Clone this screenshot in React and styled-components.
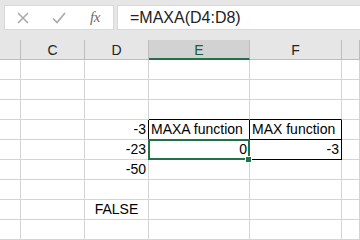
import React from 'react';
import styled, { createGlobalStyle } from 'styled-components';

const GlobalStyle = createGlobalStyle`
    body {
        margin: 0;
        background: #ffffff;
        font-family: "Liberation Sans", Arial, sans-serif;
    }
`;

const Sheet = styled.div`
    width: 360px;
    height: 240px;
    overflow: hidden;
    background: #ffffff;
`;

const FormulaBar = styled.div`
    display: flex;
    align-items: flex-start;
    gap: 3px;
    height: 40px;
    padding: 5px 0 0 4px;
    box-sizing: border-box;
    background: #e6e6e6;
`;

const ActionBox = styled.div`
    display: flex;
    align-items: center;
    width: 110px;
    height: 25px;
    box-sizing: border-box;
    background: #ffffff;
    border: 1px solid #d9d9d9;
`;

const ActionIcon = styled.span`
    display: flex;
    align-items: center;
    justify-content: center;
    width: 36px;
    height: 100%;
`;

const Fx = styled.span`
    font-family: "Liberation Serif", "Times New Roman", serif;
    font-style: italic;
    font-size: 15px;
    color: #6b6b6b;
    letter-spacing: -0.5px;
`;

const FormulaInput = styled.div`
    flex: 1;
    height: 25px;
    box-sizing: border-box;
    background: #ffffff;
    border: 1px solid #d9d9d9;
    border-right: none;
    padding-left: 12px;
    font-size: 16px;
    line-height: 23px;
    color: #222222;
`;

const GridWrap = styled.div`
    position: relative;
`;

const Grid = styled.div`
    display: grid;
    grid-template-columns: 21px 64px 64px 101px 92px 1fr;
    grid-auto-rows: 20px;
`;

const HeaderCell = styled.div`
    box-sizing: border-box;
    display: flex;
    align-items: center;
    justify-content: center;
    background: ${p => (p.$active ? '#d2d2d2' : '#e6e6e6')};
    border-right: 1px solid #bdbdbd;
    border-bottom: ${p => (p.$active ? '2px solid #217346' : '1px solid #bdbdbd')};
    font-size: 14px;
    padding-top: ${p => (p.$active ? '1px' : '0')};
    color: ${p => (p.$active ? '#1d5b35' : '#222222')};
`;

const Cell = styled.div`
    box-sizing: border-box;
    display: flex;
    align-items: flex-end;
    justify-content: ${p => p.$align || 'flex-start'};
    padding: 0 2px 1px 2px;
    border-right: 1px solid ${p => (p.$rb ? '#000000' : '#d4d4d4')};
    border-bottom: 1px solid ${p => (p.$bb ? '#000000' : '#d4d4d4')};
    font-size: 14px;
    line-height: 17px;
    color: #000000;
    white-space: nowrap;
    overflow: visible;
`;

const Selection = styled.div`
    position: absolute;
    left: 148px;
    top: 99px;
    width: 102px;
    height: 21px;
    box-sizing: border-box;
    border: 2px solid #217346;
    pointer-events: none;
`;

const Handle = styled.div`
    position: absolute;
    right: -3px;
    bottom: -4px;
    width: 5px;
    height: 5px;
    background: #217346;
    box-shadow: 0 0 0 1px #ffffff;
`;

const columns = ['', 'C', 'D', 'E', 'F', ''];

// row index -> cells by column index
const data = {
    3: { 2: { text: '-3', align: 'flex-end' }, 3: { text: 'MAXA function' }, 4: { text: 'MAX function' } },
    4: { 2: { text: '-23', align: 'flex-end' }, 3: { text: '0', align: 'flex-end' }, 4: { text: '-3', align: 'flex-end' } },
    5: { 2: { text: '-50', align: 'flex-end' } },
    7: { 2: { text: 'FALSE', align: 'center' } },
};

const borders = {
    '2-3': { bb: true },
    '2-4': { bb: true },
    '3-2': { rb: true },
    '3-3': { rb: true, bb: true },
    '3-4': { rb: true, bb: true },
    '4-2': { rb: true },
    '4-3': { rb: true },
    '4-4': { rb: true, bb: true },
};

const CrossIcon = () => (
    <svg width="12" height="12" viewBox="0 0 12 12">
        <path d="M1 1 L11 11 M11 1 L1 11" stroke="#a8a8a8" strokeWidth="1.5" fill="none" />
    </svg>
);

const CheckIcon = () => (
    <svg width="14" height="12" viewBox="0 0 14 12">
        <path d="M1 6.5 L5 10.5 L13 1" stroke="#a8a8a8" strokeWidth="1.6" fill="none" />
    </svg>
);

export default function App() {
    const rows = Array.from({ length: 9 }, (_, i) => i);

    return (
        <Sheet>
            <GlobalStyle />
            <FormulaBar>
                <ActionBox>
                    <ActionIcon><CrossIcon /></ActionIcon>
                    <ActionIcon><CheckIcon /></ActionIcon>
                    <ActionIcon><Fx>fx</Fx></ActionIcon>
                </ActionBox>
                <FormulaInput>=MAXA(D4:D8)</FormulaInput>
            </FormulaBar>
            <GridWrap>
                <Grid>
                    {columns.map((c, i) => (
                        <HeaderCell key={'h' + i} $active={c === 'E'}>{c}</HeaderCell>
                    ))}
                    {rows.map(r =>
                        columns.map((_, c) => {
                            const cell = data[r] && data[r][c];
                            const b = borders[r + '-' + c] || {};
                            return (
                                <Cell key={r + '-' + c} $align={cell && cell.align} $rb={b.rb} $bb={b.bb}>
                                    {cell ? cell.text : ''}
                                </Cell>
                            );
                        })
                    )}
                </Grid>
                <Selection>
                    <Handle />
                </Selection>
            </GridWrap>
        </Sheet>
    );
}
